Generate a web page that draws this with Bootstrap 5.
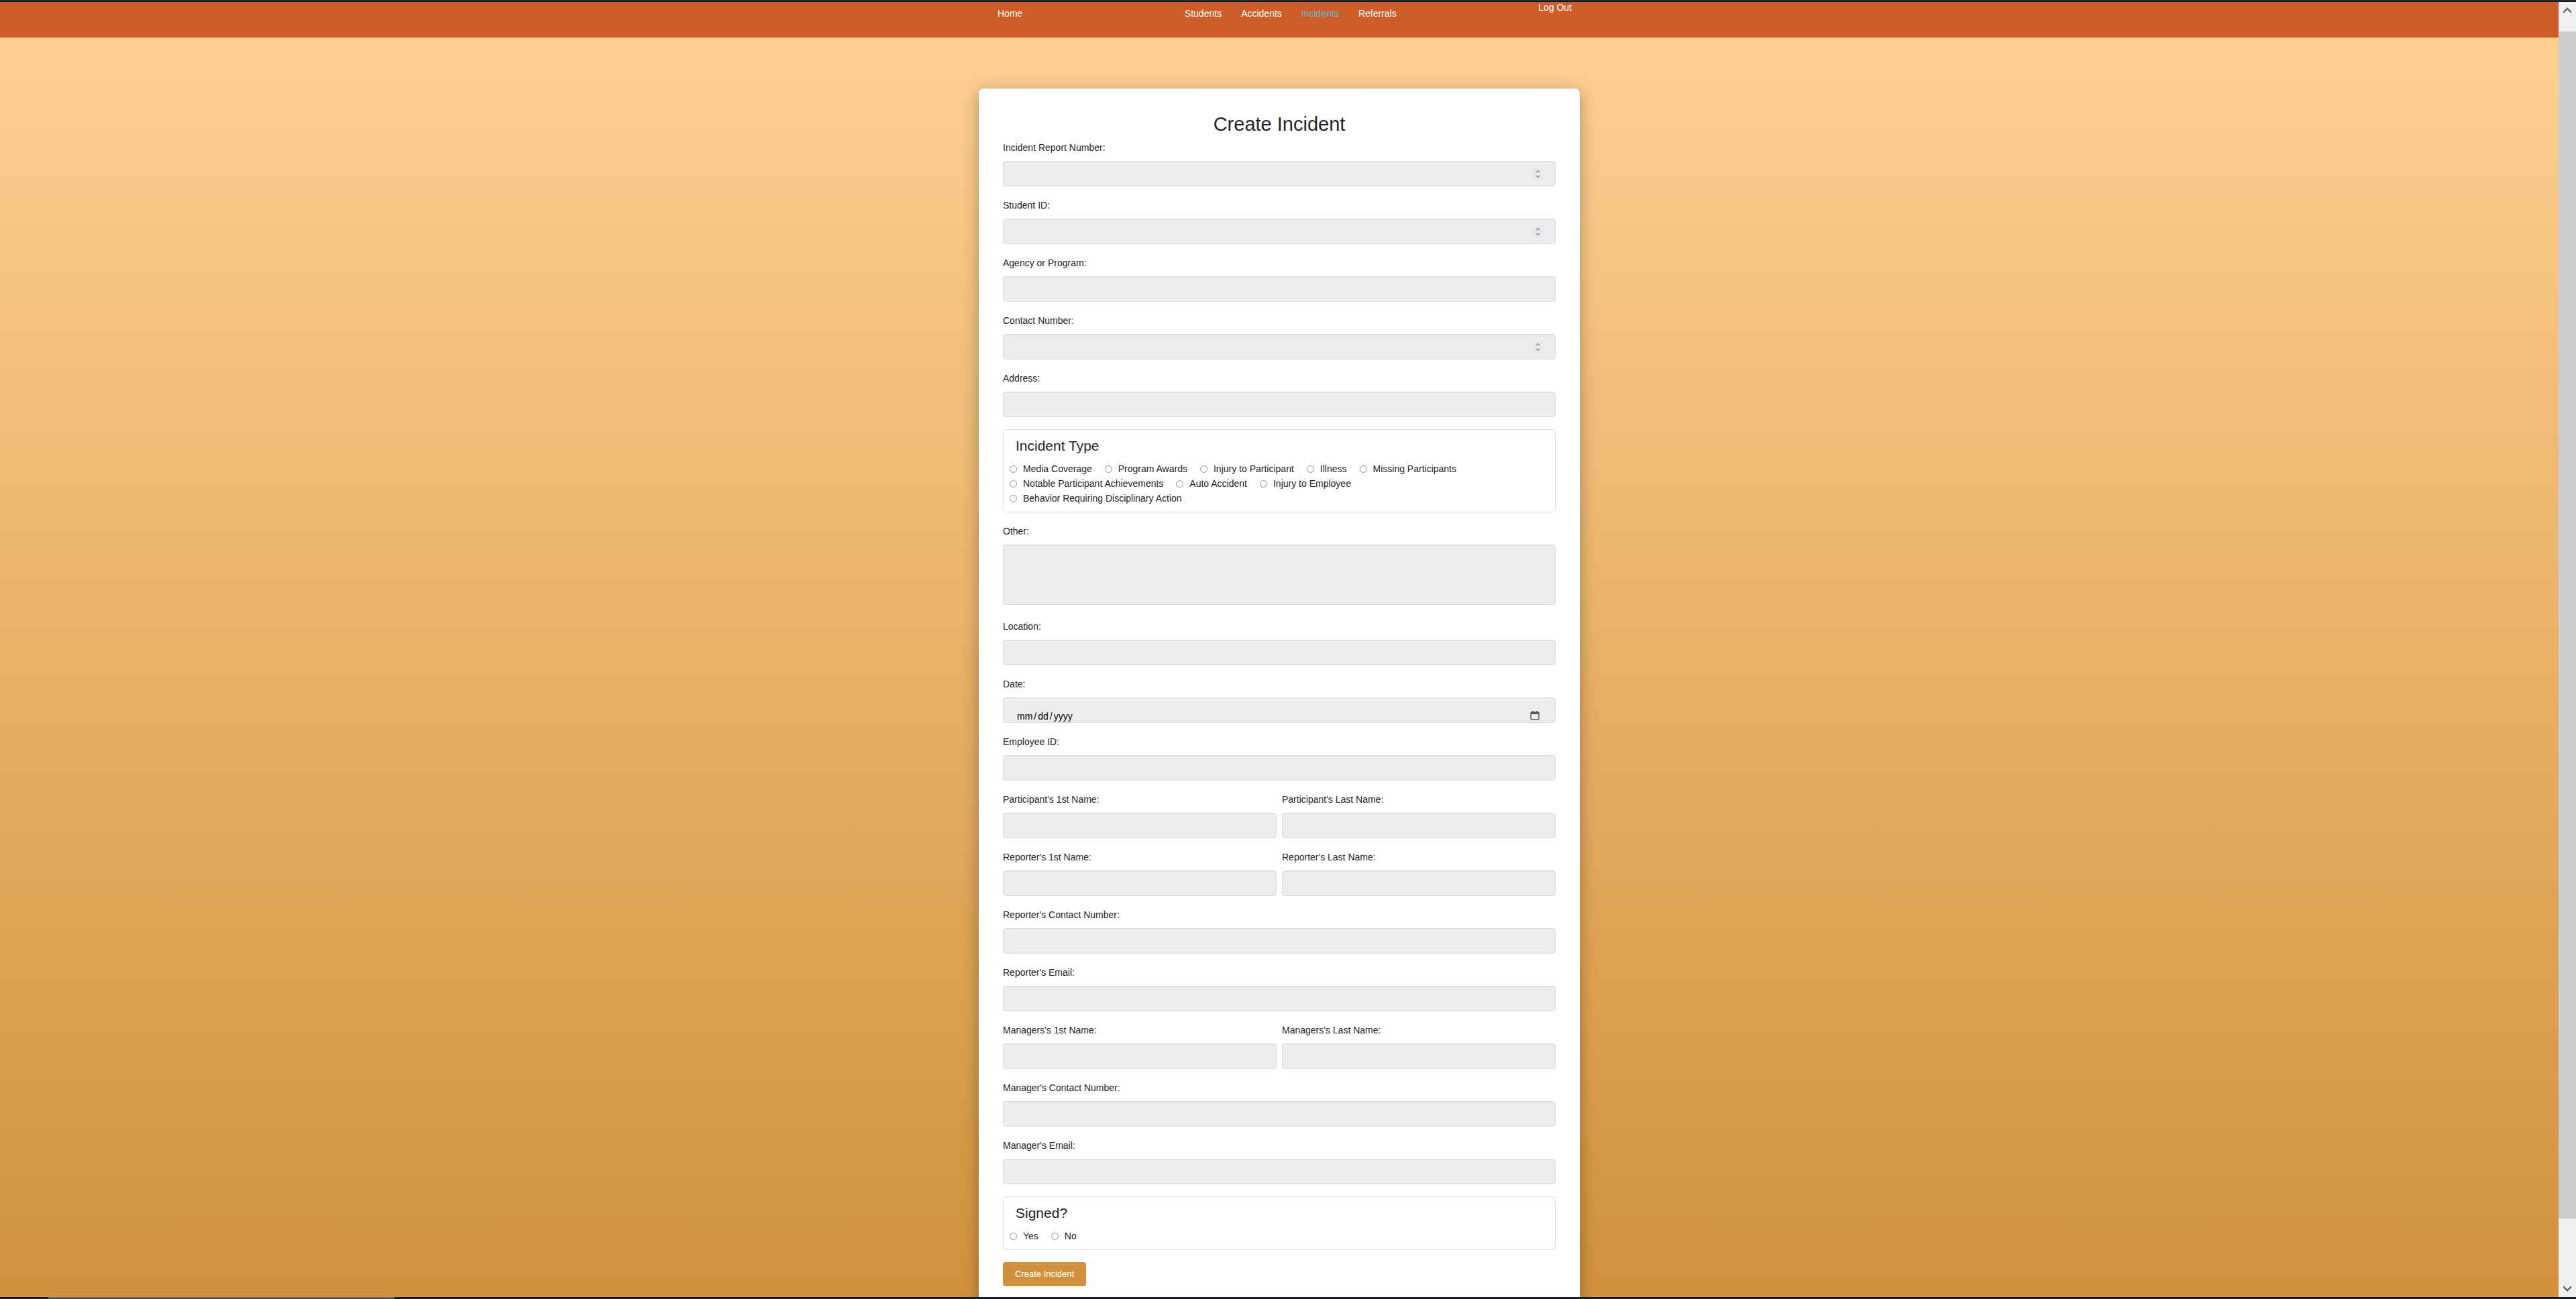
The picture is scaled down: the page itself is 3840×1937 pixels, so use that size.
<!DOCTYPE html>
<html lang="en">
<head>
<meta charset="utf-8">
<meta name="viewport" content="width=device-width, initial-scale=1">
<title>Create Incident</title>
<link rel="stylesheet" href="https://cdn.jsdelivr.net/npm/bootstrap@5.3.0/dist/css/bootstrap.min.css">
<style>
body { font-family: "Liberation Sans", Arial, sans-serif; font-size: 14px; line-height: 20px; color: #212529; }
.edge-top { height: 3px; background: #2b2a33; border-bottom: 1px solid #0c0c14; }
.edge-bottom { height: 3px; background: #1a1d26; padding-left: 72px; }
.edge-task { width: 516px; height: 3px; background: #43434c; border-top: 2px solid #6b6a68; }
.page-view { background: linear-gradient(#ffd194, #d1913c); }
.site-nav { height: 53px; padding-left: 16px; background: #cc5c2a; }
.nav-inner { width: 856px; }
.nav-inner a { color: #fff; text-decoration: none; }
.nav-inner a.current { color: #5fb8d8; }
.nav-links { gap: 29px; padding-left: 30px; }
.nav-main { padding-top: 7px; }
.nav-exit { margin-top: -2px; }
.form-panel { width: 896px; margin-top: 76px; padding: 36px 36px 60px; background: #fff; border-radius: 8px; box-shadow: 0 5px 25px rgba(0, 0, 0, .3); }
.form-panel h1 { font-size: 29px; line-height: 34px; margin-bottom: 8px; font-weight: 400; }
.field { margin-bottom: 18px; }
.field label.form-label { display: block; margin-bottom: 10px; line-height: 20px; }
.field .form-control { height: 38px; padding: 8px 20px; font-size: 14px; background-color: #ededed; border: 1px solid #dcdcdc; border-radius: 4px; box-shadow: inset 0 1px 1px rgba(0, 0, 0, .04); }
.field textarea.form-control { height: 90px; resize: none; }
.field-tall { margin-bottom: 22px; }
.field .form-control[type=number] { appearance: textfield; background: #ededed url("data:image/svg+xml,%3Csvg xmlns='http://www.w3.org/2000/svg' width='15' height='17'%3E%3Crect width='15' height='17' fill='%23e8e8ec'/%3E%3Cpath d='M5 6l2.500-2.500L10 6M5 11l2.500 2.500L10 11' fill='none' stroke='%2385858a' stroke-width='1.200'/%3E%3C/svg%3E") no-repeat right 18px center; }
.form-control[type=number]::-webkit-inner-spin-button { display: none; }
.field .form-control[type=date] { color: #000; padding: 18px 20px 0; background: #ededed url("data:image/svg+xml,%3Csvg xmlns='http://www.w3.org/2000/svg' width='14' height='14'%3E%3Crect x='1' y='2' width='12' height='11' rx='1.500' fill='none' stroke='%23555' stroke-width='1.400'/%3E%3Cpath d='M1 2h12v3H1zM3 0h1.600v3H3zM9.400 0H11v3H9.400z' fill='%23555'/%3E%3C/svg%3E") no-repeat right 23px top 19px; }
.form-control[type=date]::-webkit-calendar-picker-indicator { opacity: 0; }
.form-control[type=date]::-webkit-datetime-edit-text { padding: 0 2px; }
.pair { display: grid; grid-template-columns: 1fr 1fr; gap: 8px; }
.choice-box { border: 1px solid #dcdcdc; border-radius: 5px; margin-bottom: 18px; padding: 10px 48px 10px 9px; }
.choice-box h2 { font-size: 21px; line-height: 28px; margin: 0 0 10px 9px; font-weight: 400; }
.choices { column-gap: 19px; row-gap: 2px; line-height: 20px; }
.choice { gap: 9px; }
.choice input { appearance: none; width: 11px; height: 11px; margin: 0; border: 1px solid #8f8f9d; border-radius: 50%; background: #fff; }
.choice input:checked { background: #8f8f9d; }
.btn-create, .btn-create:hover { height: 36px; padding: 0 18px; font-size: 13px; color: #fff; background: #d1913c; border: 0; border-radius: 4px; }
.side-scroll { width: 26px; background: #f0f0f0; padding: 7px 0; }
.side-scroll .thumb { margin: 27px 0 100px; background: #cdcdcd; }
</style>
<script src="https://cdn.jsdelivr.net/npm/bootstrap@5.3.0/dist/js/bootstrap.bundle.min.js"></script>
</head>
<body class="vh-100 overflow-hidden d-flex flex-column">
<div class="edge-top flex-shrink-0"></div>
<div class="d-flex flex-grow-1 overflow-hidden">
  <div class="page-view flex-grow-1 overflow-hidden">
    <nav class="site-nav d-flex justify-content-center" aria-label="Main">
      <div class="nav-inner d-flex justify-content-between align-items-start">
        <a class="nav-main" href="#">Home</a>
        <div class="nav-links nav-main d-flex">
          <a href="#">Students</a>
          <a href="#">Accidents</a>
          <a class="current" href="#" aria-current="page">Incidents</a>
          <a href="#">Referrals</a>
        </div>
        <a class="nav-exit" href="#">Log Out</a>
      </div>
    </nav>
    <main class="form-panel mx-auto">
      <h1 class="text-center">Create Incident</h1>
      <form>
        <div class="field"><label class="form-label" for="report">Incident Report Number:</label><input class="form-control" type="number" id="report"></div>
        <div class="field"><label class="form-label" for="student">Student ID:</label><input class="form-control" type="number" id="student"></div>
        <div class="field"><label class="form-label" for="agency">Agency or Program:</label><input class="form-control" type="text" id="agency"></div>
        <div class="field"><label class="form-label" for="contact">Contact Number:</label><input class="form-control" type="number" id="contact"></div>
        <div class="field"><label class="form-label" for="address">Address:</label><input class="form-control" type="text" id="address"></div>
        <section class="choice-box">
          <h2>Incident Type</h2>
          <div class="choices d-flex flex-wrap">
            <label class="choice d-flex align-items-center"><input type="radio" name="type">Media Coverage</label>
            <label class="choice d-flex align-items-center"><input type="radio" name="type">Program Awards</label>
            <label class="choice d-flex align-items-center"><input type="radio" name="type">Injury to Participant</label>
            <label class="choice d-flex align-items-center"><input type="radio" name="type">Illness</label>
            <label class="choice d-flex align-items-center"><input type="radio" name="type">Missing Participants</label>
            <label class="choice d-flex align-items-center"><input type="radio" name="type">Notable Participant Achievements</label>
            <label class="choice d-flex align-items-center"><input type="radio" name="type">Auto Accident</label>
            <label class="choice d-flex align-items-center"><input type="radio" name="type">Injury to Employee</label>
            <label class="choice d-flex align-items-center"><input type="radio" name="type">Behavior Requiring Disciplinary Action</label>
          </div>
        </section>
        <div class="field field-tall"><label class="form-label" for="other">Other:</label><textarea class="form-control" id="other"></textarea></div>
        <div class="field"><label class="form-label" for="location">Location:</label><input class="form-control" type="text" id="location"></div>
        <div class="field"><label class="form-label" for="date">Date:</label><input class="form-control" type="date" id="date"></div>
        <div class="field"><label class="form-label" for="employee">Employee ID:</label><input class="form-control" type="text" id="employee"></div>
        <div class="pair">
          <div class="field"><label class="form-label" for="pfirst">Participant's 1st Name:</label><input class="form-control" type="text" id="pfirst"></div>
          <div class="field"><label class="form-label" for="plast">Participant's Last Name:</label><input class="form-control" type="text" id="plast"></div>
        </div>
        <div class="pair">
          <div class="field"><label class="form-label" for="rfirst">Reporter's 1st Name:</label><input class="form-control" type="text" id="rfirst"></div>
          <div class="field"><label class="form-label" for="rlast">Reporter's Last Name:</label><input class="form-control" type="text" id="rlast"></div>
        </div>
        <div class="field"><label class="form-label" for="rcontact">Reporter's Contact Number:</label><input class="form-control" type="text" id="rcontact"></div>
        <div class="field"><label class="form-label" for="remail">Reporter's Email:</label><input class="form-control" type="email" id="remail"></div>
        <div class="pair">
          <div class="field"><label class="form-label" for="mfirst">Managers's 1st Name:</label><input class="form-control" type="text" id="mfirst"></div>
          <div class="field"><label class="form-label" for="mlast">Managers's Last Name:</label><input class="form-control" type="text" id="mlast"></div>
        </div>
        <div class="field"><label class="form-label" for="mcontact">Manager's Contact Number:</label><input class="form-control" type="text" id="mcontact"></div>
        <div class="field"><label class="form-label" for="memail">Manager's Email:</label><input class="form-control" type="email" id="memail"></div>
        <section class="choice-box">
          <h2>Signed?</h2>
          <div class="choices d-flex flex-wrap">
            <label class="choice d-flex align-items-center"><input type="radio" name="signed">Yes</label>
            <label class="choice d-flex align-items-center"><input type="radio" name="signed">No</label>
          </div>
        </section>
        <button class="btn btn-create" type="button">Create Incident</button>
      </form>
    </main>
  </div>
  <div class="side-scroll flex-shrink-0 d-flex flex-column" aria-hidden="true">
    <svg class="mx-auto flex-shrink-0" width="12" height="10" viewBox="0 -1 12 10"><path d="M0 6L6 0l6 6v3L6 3.500 0 9z" fill="#606060"/></svg>
    <div class="thumb flex-grow-1"></div>
    <svg class="mx-auto flex-shrink-0" width="12" height="10" viewBox="0 0 12 10"><path d="M0 3l6 6 6-6V0L6 5.500 0 0z" fill="#606060"/></svg>
  </div>
</div>
<div class="edge-bottom flex-shrink-0"><div class="edge-task"></div></div>
</body>
</html>
